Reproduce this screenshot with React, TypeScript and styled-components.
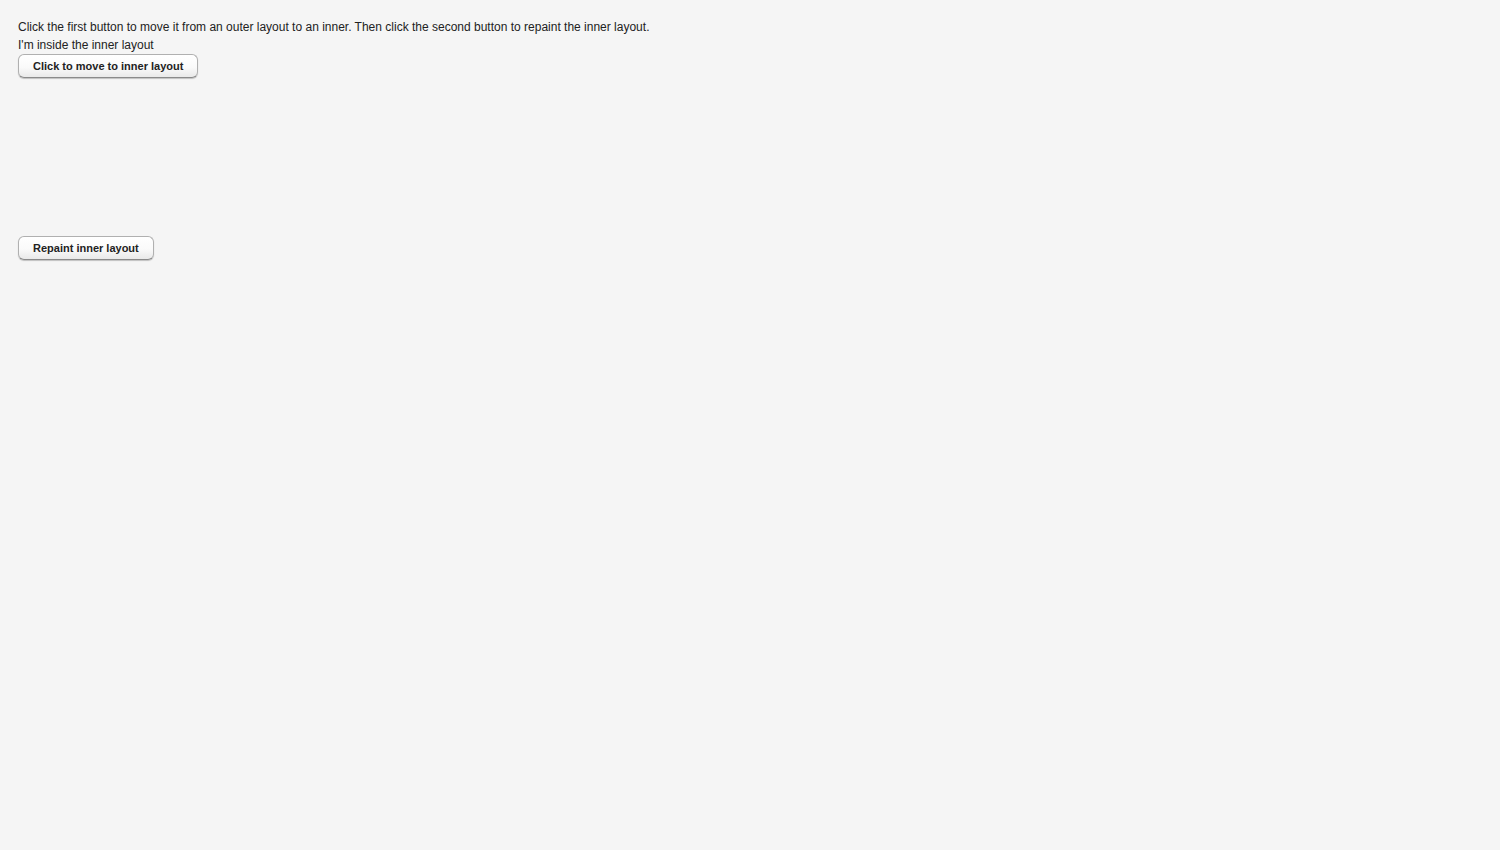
import React from "react";
import styled, { createGlobalStyle } from "styled-components";

const GlobalStyle = createGlobalStyle`
  html, body {
    margin: 0;
    padding: 0;
    background-color: #f5f5f5;
  }
  body {
    font-family: "Liberation Sans", Arial, Helvetica, sans-serif;
    font-size: 12px;
    color: #222222;
  }
`;

const Wrapper = styled.div`
  padding: 18px 18px;
  min-height: 850px;
  box-sizing: border-box;
  display: flex;
  flex-direction: column;
  align-items: flex-start;
`;

const Label = styled.div`
  line-height: 18px;
  white-space: nowrap;
`;

const InnerLayout = styled.div`
  height: 200px;
  display: flex;
  flex-direction: column;
  align-items: flex-start;
`;

const Button = styled.button`
  height: 24px;
  padding: 0 14px;
  font-family: "Liberation Sans", Arial, Helvetica, sans-serif;
  font-size: 11px;
  font-weight: 700;
  color: #222222;
  border: 1px solid #b0b0b0;
  border-bottom-color: #8a8a8a;
  border-radius: 6px;
  background: linear-gradient(to bottom, #ffffff 0%, #fafafa 55%, #e9e9e9 100%);
  box-shadow: 0 1px 1px rgba(0, 0, 0, 0.22);
  cursor: pointer;
  white-space: nowrap;
`;

const App: React.FunctionComponent = () => {
  return (
    <>
      <GlobalStyle />
      <Wrapper>
        <Label>
          Click the first button to move it from an outer layout to an inner.
          Then click the second button to repaint the inner layout.
        </Label>
        <InnerLayout>
          <Label>I'm inside the inner layout</Label>
          <Button>Click to move to inner layout</Button>
        </InnerLayout>
        <Button>Repaint inner layout</Button>
      </Wrapper>
    </>
  );
};

export default App;
